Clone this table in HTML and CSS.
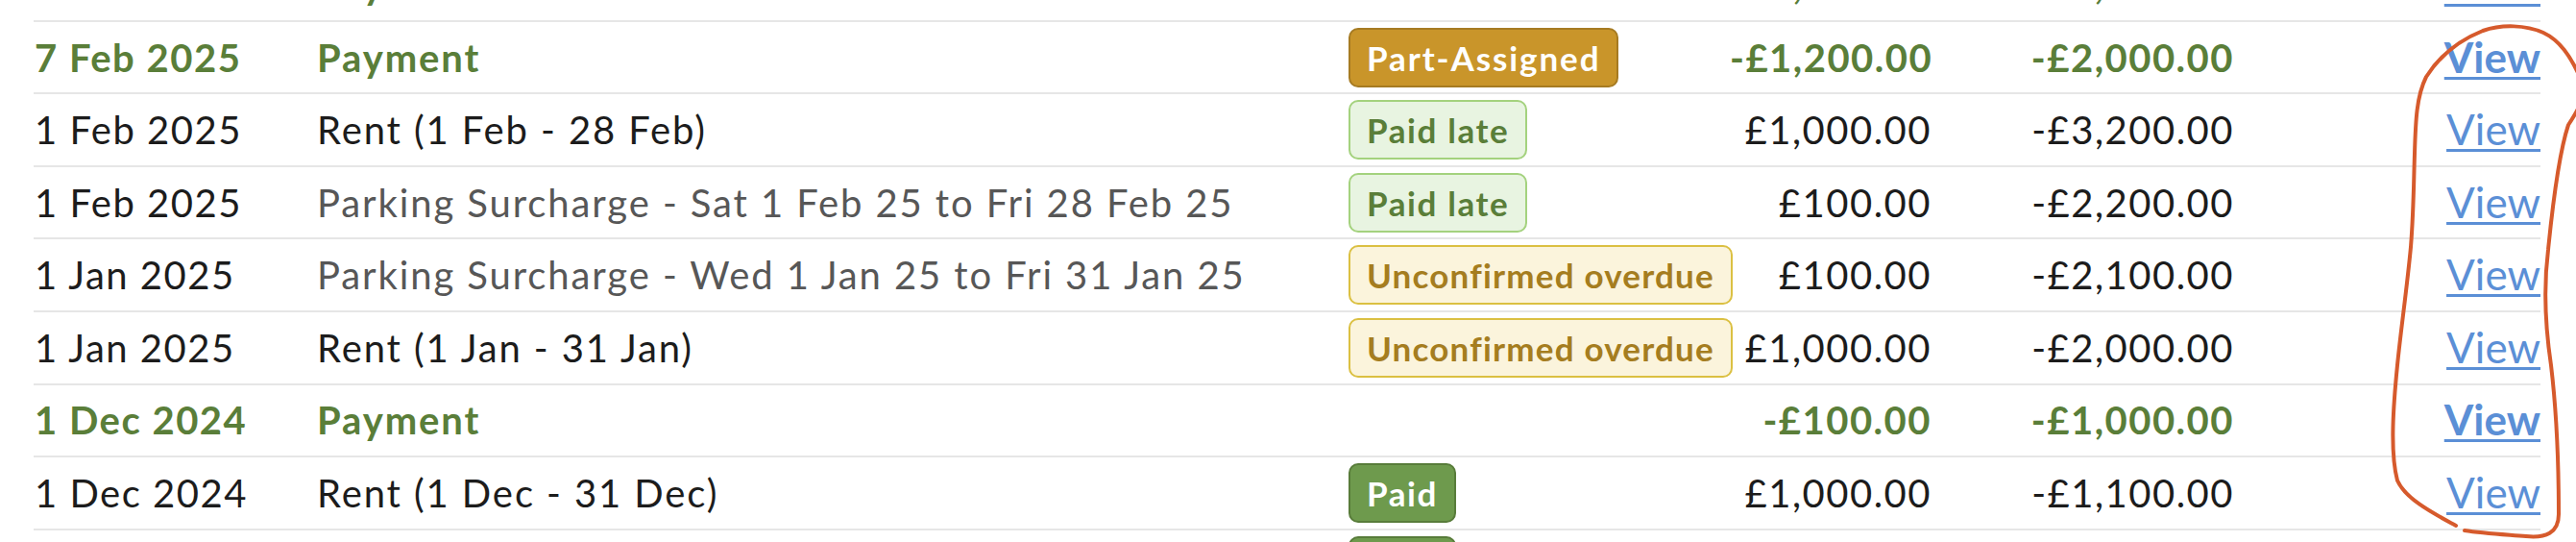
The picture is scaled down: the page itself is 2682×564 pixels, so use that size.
FILE: index.html
```html
<!DOCTYPE html>
<html lang="en">
<head>
<meta charset="utf-8">
<title>Ledger</title>
<link rel="stylesheet" href="styles.css">
</head>
<body>
<div class="ledger">
  <div class="row payment">
    <span class="c-date">14 Feb 2025</span>
    <span class="c-desc">Payment</span>
    <span class="c-status"></span>
    <span class="c-amt">-£1,000.00</span>
    <span class="c-bal">-£3,000.00</span>
    <span class="c-act"><a href="#" class="view">View</a></span>
  </div>
  <div class="row payment">
    <span class="c-date">7 Feb 2025</span>
    <span class="c-desc">Payment</span>
    <span class="c-status"><span class="badge b-part">Part-Assigned</span></span>
    <span class="c-amt">-£1,200.00</span>
    <span class="c-bal">-£2,000.00</span>
    <span class="c-act"><a href="#" class="view">View</a></span>
  </div>
  <div class="row">
    <span class="c-date">1 Feb 2025</span>
    <span class="c-desc">Rent (1 Feb - 28 Feb)</span>
    <span class="c-status"><span class="badge b-late">Paid late</span></span>
    <span class="c-amt">£1,000.00</span>
    <span class="c-bal">-£3,200.00</span>
    <span class="c-act"><a href="#" class="view">View</a></span>
  </div>
  <div class="row">
    <span class="c-date">1 Feb 2025</span>
    <span class="c-desc muted">Parking Surcharge - Sat 1 Feb 25 to Fri 28 Feb 25</span>
    <span class="c-status"><span class="badge b-late">Paid late</span></span>
    <span class="c-amt">£100.00</span>
    <span class="c-bal">-£2,200.00</span>
    <span class="c-act"><a href="#" class="view">View</a></span>
  </div>
  <div class="row">
    <span class="c-date">1 Jan 2025</span>
    <span class="c-desc muted">Parking Surcharge - Wed 1 Jan 25 to Fri 31 Jan 25</span>
    <span class="c-status"><span class="badge b-unconf">Unconfirmed overdue</span></span>
    <span class="c-amt">£100.00</span>
    <span class="c-bal">-£2,100.00</span>
    <span class="c-act"><a href="#" class="view">View</a></span>
  </div>
  <div class="row">
    <span class="c-date">1 Jan 2025</span>
    <span class="c-desc">Rent (1 Jan - 31 Jan)</span>
    <span class="c-status"><span class="badge b-unconf">Unconfirmed overdue</span></span>
    <span class="c-amt">£1,000.00</span>
    <span class="c-bal">-£2,000.00</span>
    <span class="c-act"><a href="#" class="view">View</a></span>
  </div>
  <div class="row payment">
    <span class="c-date">1 Dec 2024</span>
    <span class="c-desc">Payment</span>
    <span class="c-status"></span>
    <span class="c-amt">-£100.00</span>
    <span class="c-bal">-£1,000.00</span>
    <span class="c-act"><a href="#" class="view">View</a></span>
  </div>
  <div class="row">
    <span class="c-date">1 Dec 2024</span>
    <span class="c-desc">Rent (1 Dec - 31 Dec)</span>
    <span class="c-status"><span class="badge b-paid">Paid</span></span>
    <span class="c-amt">£1,000.00</span>
    <span class="c-bal">-£1,100.00</span>
    <span class="c-act"><a href="#" class="view">View</a></span>
  </div>
  <div class="row">
    <span class="c-date">1 Nov 2024</span>
    <span class="c-desc">Rent (1 Nov - 30 Nov)</span>
    <span class="c-status"><span class="badge b-paid">Paid</span></span>
    <span class="c-amt">£1,000.00</span>
    <span class="c-bal">-£2,100.00</span>
    <span class="c-act"><a href="#" class="view">View</a></span>
  </div>
</div>
<svg class="scribble" width="2682" height="564" viewBox="0 0 2682 564" aria-hidden="true">
  <path d="M2557 547 C2535 535 2505 520 2496 500 C2488 470 2492 420 2496 380 C2500 340 2506 300 2510 257 C2513 220 2513 190 2514 160 C2515 125 2516 100 2526 80 C2540 58 2560 42 2585 32 C2605 25 2630 26 2648 34 C2665 42 2676 58 2686 80 C2694 100 2684 115 2674 130 C2664 160 2658 210 2653 260 C2648 300 2650 340 2656 380 C2662 430 2664 490 2664 535 C2664 555 2650 560 2630 558 C2605 556 2585 555 2566 552" />
</svg>
</body>
</html>
```

FILE: styles.css
```css
html, body {
  margin: 0;
  padding: 0;
  background: #ffffff;
  overflow: hidden;
}

body {
  width: 2682px;
  height: 564px;
  position: relative;
  font-family: "Lato", "Open Sans", sans-serif;
  color: #1c1c1c;
}

.ledger {
  margin: -52.9px 0 0 35px;
  width: 2610px;
}

.row {
  display: grid;
  grid-template-columns: 295px 1074px 397px 210px 315px 319px;
  align-items: center;
  height: 73.6px;
  border-bottom: 2px solid #e6e6e6;
  font-size: 40px;
  letter-spacing: 1.5px;
  line-height: 48px;
  white-space: nowrap;
}

.c-date {
  padding-left: 1px;
}

.c-desc {
  letter-spacing: 1.9px;
}

.c-desc.muted {
  color: #575757;
}

.c-amt,
.c-bal,
.c-act {
  text-align: right;
}

.row.payment {
  color: #5a7e39;
  font-weight: 700;
}

.view {
  color: #5b8fd6;
  font-size: 44px;
  letter-spacing: 0;
  font-weight: 400;
  text-decoration: underline;
  text-decoration-thickness: 3px;
  text-underline-offset: 4px;
}

.row.payment .view {
  font-weight: 700;
}

.badge {
  display: inline-block;
  font-size: 35px;
  font-weight: 700;
  letter-spacing: 1.6px;
  line-height: 42px;
  padding: 8px 17px;
  border: 2px solid;
  border-radius: 10px;
  vertical-align: middle;
}

.b-part {
  background: #c9952a;
  border-color: #a67b22;
  color: #ffffff;
  letter-spacing: 1.9px;
}

.b-late {
  background: #e8f4e1;
  border-color: #a4d27e;
  color: #5a7e39;
}

.b-unconf {
  background: #fbf4dc;
  border-color: #dbc042;
  color: #a57d1f;
  letter-spacing: 1.2px;
}

.b-paid {
  background: #6e9a4d;
  border-color: #587c3a;
  color: #ffffff;
}

.scribble {
  position: absolute;
  left: 0;
  top: 0;
  pointer-events: none;
  fill: none;
  stroke: #d65a2c;
  stroke-width: 4px;
  stroke-linecap: round;
  stroke-linejoin: round;
}
```
